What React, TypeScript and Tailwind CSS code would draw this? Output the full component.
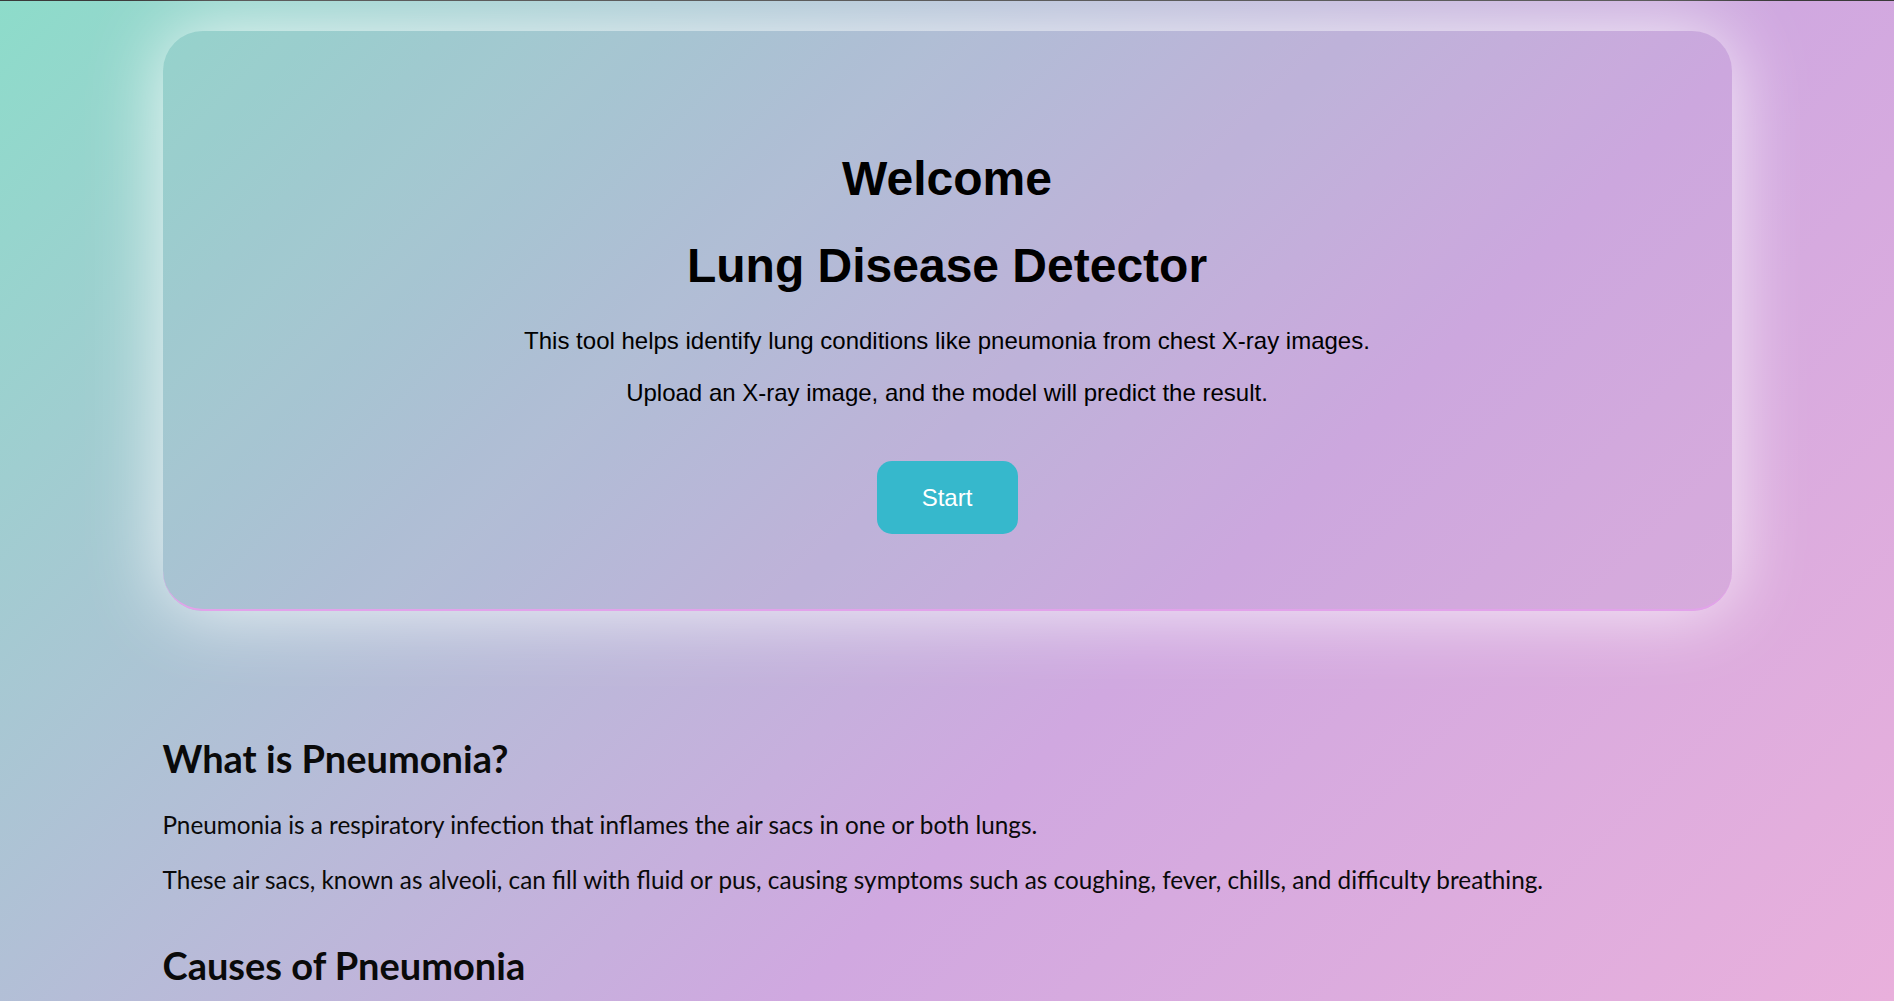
import React from "react";

export default function App() {
  return (
    <div className="min-h-screen w-full border-t border-[#3a3a3a] bg-fixed bg-[linear-gradient(135deg,#8ddcca_0%,#d0a8e0_62%,#e9b0dc_100%)]">
      <div className="mx-auto w-[1569px] pt-[30px] pb-[10px]">
        <section className="flex flex-col items-center rounded-[40px] border-b-2 border-[#e2a2ea] bg-[rgba(160,170,210,0.08)] pt-[120px] pb-[75px] text-black shadow-[0_0_75px_rgba(255,255,255,0.85)] font-['Liberation_Sans',Arial,sans-serif]">
          <h1 className="text-[48px] font-bold leading-[55px]">Welcome</h1>
          <h1 className="mt-[32px] text-[48px] font-bold leading-[55px]">Lung Disease Detector</h1>
          <p className="mt-[35px] text-[24px] leading-[26px]">
            This tool helps identify lung conditions like pneumonia from chest X-ray images.
          </p>
          <p className="mt-[26px] text-[24px] leading-[26px]">
            Upload an X-ray image, and the model will predict the result.
          </p>
          <button className="mt-[55px] flex h-[73px] w-[141px] items-center justify-center rounded-[15px] bg-[#36b8cc] text-[24px] text-white">
            Start
          </button>
        </section>

        <section className="mt-[125px] text-[#0a0a0a] font-['Lato','Noto_Sans',sans-serif]">
          <h2 className="text-[38px] font-bold leading-[44px]">What is Pneumonia?</h2>
          <p className="mt-[30px] text-[24.3px] leading-[30px]">
            Pneumonia is a respiratory infection that inflames the air sacs in one or both lungs.
          </p>
          <p className="mt-[25px] text-[24.3px] leading-[30px]">
            These air sacs, known as alveoli, can fill with fluid or pus, causing symptoms such as coughing, fever, chills, and difficulty breathing.
          </p>
          <h2 className="mt-[48px] text-[38px] font-bold leading-[44px]">Causes of Pneumonia</h2>
        </section>
      </div>
    </div>
  );
}
